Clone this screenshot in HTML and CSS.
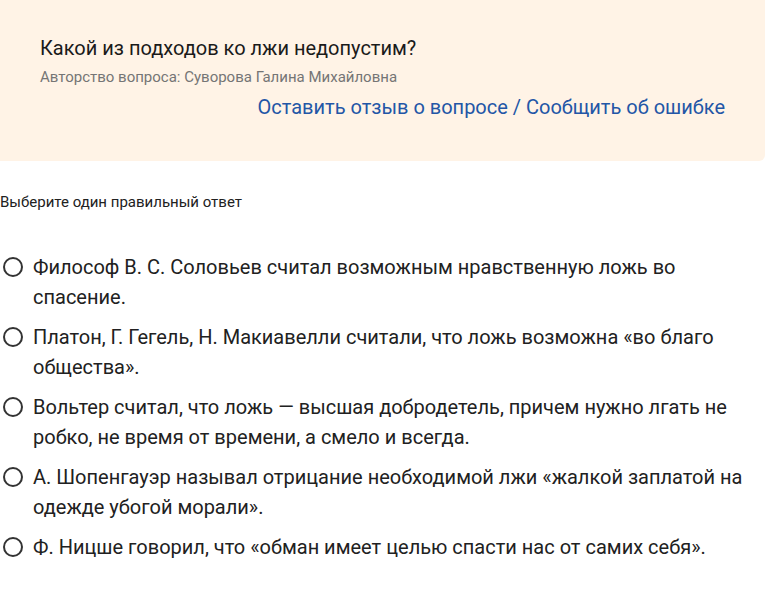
FILE: index.html
```html
<!DOCTYPE html>
<html lang="ru">
<head>
  <meta charset="UTF-8">
  <meta name="viewport" content="width=device-width, initial-scale=1.0">
  <title>Вопрос</title>
  <link rel="stylesheet" href="styles.css">
</head>
<body>

  <!-- Шапка вопроса -->
  <div class="question-box">
    <h1 class="question-title">Какой из подходов ко лжи недопустим?</h1>
    <p class="question-author">Авторство вопроса: Суворова Галина Михайловна</p>
    <div class="question-feedback">
      <a href="#" class="link">Оставить отзыв о вопросе / Сообщить об ошибке</a>
    </div>
  </div>

  <p class="hint">Выберите один правильный ответ</p>

  <!-- Варианты ответа -->
  <div class="answers">
    <label class="answer">
      <span class="radio"></span>
      <span class="answer-text">Философ В. С. Соловьев считал возможным нравственную ложь во спасение.</span>
    </label>
    <label class="answer">
      <span class="radio"></span>
      <span class="answer-text">Платон, Г. Гегель, Н. Макиавелли считали, что ложь возможна «во благо общества».</span>
    </label>
    <label class="answer">
      <span class="radio"></span>
      <span class="answer-text">Вольтер считал, что ложь — высшая добродетель, причем нужно лгать не робко, не время от времени, а смело и всегда.</span>
    </label>
    <label class="answer">
      <span class="radio"></span>
      <span class="answer-text">А. Шопенгауэр называл отрицание необходимой лжи «жалкой заплатой на одежде убогой морали».</span>
    </label>
    <label class="answer">
      <span class="radio"></span>
      <span class="answer-text">Ф. Ницше говорил, что «обман имеет целью спасти нас от самих себя».</span>
    </label>
  </div>

</body>
</html>
```

FILE: styles.css
```css
* {
  margin: 0;
  padding: 0;
  box-sizing: border-box;
}

body {
  font-family: Roboto, 'Liberation Sans', sans-serif;
  background-color: #fff;
  color: #212121;
  width: 765px;
}

.question-box {
  background-color: #fff3e6;
  border-bottom-right-radius: 6px;
  padding: 36px 40px 40px;
}

.question-title {
  font-size: 20px;
  font-weight: 400;
  line-height: 24px;
  color: #1a1a1a;
}

.question-author {
  margin-top: 7px;
  font-size: 15px;
  line-height: 20px;
  color: #757575;
}

.question-feedback {
  margin-top: 8px;
  text-align: right;
  line-height: 24px;
}

.link {
  font-size: 20px;
  color: #2356a6;
  text-decoration: none;
}

.hint {
  margin-top: 31px;
  font-size: 15px;
  line-height: 20px;
  color: #212121;
}

.answers {
  margin-top: 40px;
  display: flex;
  flex-direction: column;
  gap: 10px;
}

.answer {
  display: flex;
  align-items: flex-start;
  gap: 10px;
  font-size: 20px;
  line-height: 30px;
  color: #212121;
  cursor: pointer;
}

.radio {
  flex-shrink: 0;
  width: 20px;
  height: 20px;
  margin: 5px 0 0 3px;
  border: 2px solid #333;
  border-radius: 50%;
}

.answer-text {
  flex: 1;
}
```
